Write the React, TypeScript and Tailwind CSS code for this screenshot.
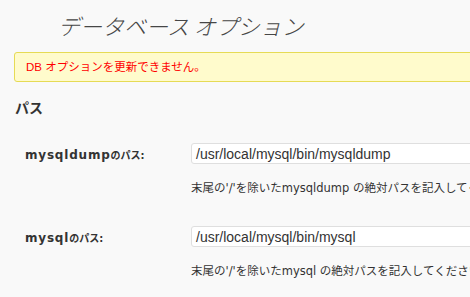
export default function App() {
  const rows = [
    { label: "mysqldump", value: "/usr/local/mysql/bin/mysqldump", tool: "mysqldump" },
    { label: "mysql", value: "/usr/local/mysql/bin/mysql", tool: "mysql" },
  ];

  return (
    <div className="w-[470px] h-[297px] overflow-hidden bg-[#f9f9f9] text-[#333] [font-family:'Liberation_Sans','Noto_Sans_CJK_JP',sans-serif]">
      <div className="pl-[14px]">
        {/* Title */}
        <h2 className="ml-[44px] pt-[11px] h-[52px] text-[22px] leading-[28px] italic font-light text-[#464646] whitespace-nowrap [font-family:'Noto_Sans_CJK_JP',sans-serif]">
          データベース オプション
        </h2>

        {/* Error notice */}
        <div className="w-[520px] h-[30px] border border-[#e6db55] bg-[#fffbcc] rounded-[3px] flex items-center pl-[11px]">
          <p className="text-[11.5px] leading-[14px] text-[#ff0000] whitespace-nowrap">
            DB オプションを更新できません。
          </p>
        </div>

        {/* Section */}
        <h3 className="mt-[16px] pl-[1px] text-[14px] leading-[18px] font-bold text-[#333] [font-family:'Noto_Sans_CJK_JP',sans-serif]">
          パス
        </h3>

        <div className="mt-[27px] flex flex-col gap-[31px]">
          {rows.map((row) => (
            <div key={row.label} className="flex">
              <div className="w-[177px] shrink-0 pl-[11px] pt-[4px] leading-[14px] font-bold text-[#333] whitespace-nowrap [font-family:'DejaVu_Sans','Noto_Sans_CJK_JP',sans-serif]">
                <span className="text-[12px] tracking-[0.8px]">{row.label}</span>
                <span className="text-[10px]">のパス:</span>
              </div>
              <div className="flex flex-col">
                <div className="w-[320px] h-[21px] bg-white border border-[#dfdfdf] rounded-[3px] pl-[4px] flex items-center">
                  <span className="text-[14px] leading-[16px] text-[#333] whitespace-nowrap">{row.value}</span>
                </div>
                <p className="mt-[17px] text-[11.5px] leading-[14px] text-[#333] whitespace-nowrap [font-family:'DejaVu_Sans','Noto_Sans_CJK_JP',sans-serif]">
                  末尾の'/'を除いた{row.tool} の絶対パスを記入してください。
                </p>
              </div>
            </div>
          ))}
        </div>
      </div>
    </div>
  );
}
